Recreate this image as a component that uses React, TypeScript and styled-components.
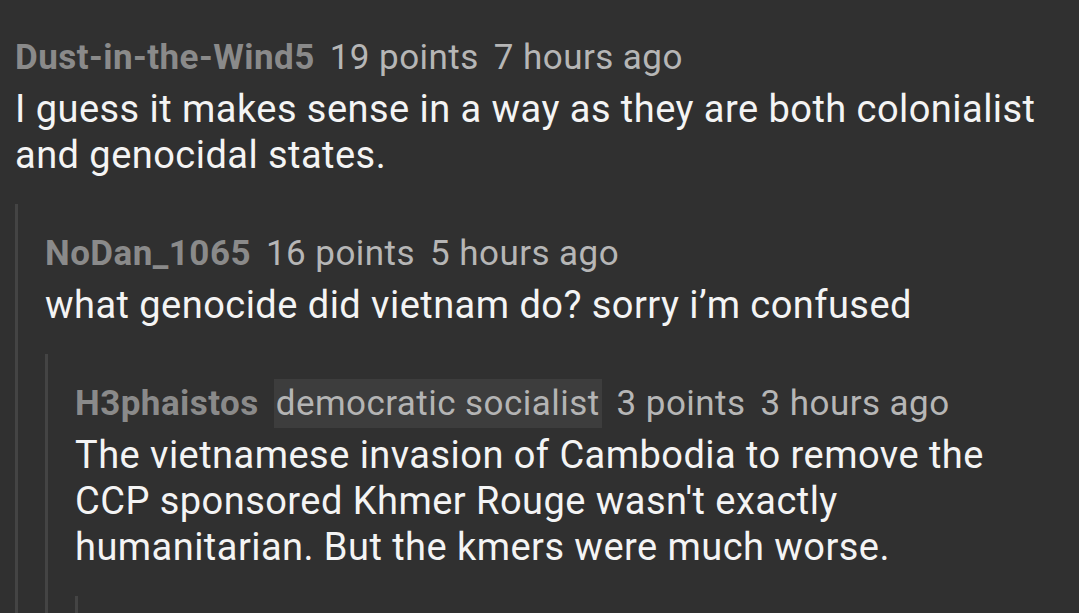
import styled, { createGlobalStyle } from 'styled-components';

const GlobalStyle = createGlobalStyle`
    html, body {
        margin: 0;
        padding: 0;
        background: #303030;
    }
    body {
        font-family: Roboto, 'Noto Sans', sans-serif;
    }
`;

interface CommentData {
    author: string;
    flair?: string;
    points: number;
    time: string;
    text: string;
    children?: CommentData[];
}

const thread: CommentData = {
    author: 'Dust-in-the-Wind5',
    points: 19,
    time: '7 hours ago',
    text: 'I guess it makes sense in a way as they are both colonialist and genocidal states.',
    children: [
        {
            author: 'NoDan_1065',
            points: 16,
            time: '5 hours ago',
            text: 'what genocide did vietnam do? sorry i’m confused',
            children: [
                {
                    author: 'H3phaistos',
                    flair: 'democratic socialist',
                    points: 3,
                    time: '3 hours ago',
                    text: "The vietnamese invasion of Cambodia to remove the CCP sponsored Khmer Rouge wasn't exactly humanitarian. But the kmers were much worse.",
                    children: [],
                },
            ],
        },
    ],
};

const Comment = ({ data }: { data: CommentData }) => (
    <CommentBox>
        <Header>
            <Author>{data.author}</Author>
            {data.flair && <Flair>{data.flair}</Flair>}
            <Meta>{data.points} points</Meta>
            <Meta>{data.time}</Meta>
        </Header>
        <Body>{data.text}</Body>
        {data.children && (
            <Replies>
                {data.children.map((c) => (
                    <Comment key={c.author} data={c} />
                ))}
            </Replies>
        )}
    </CommentBox>
);

const App = () => (
    <>
        <GlobalStyle />
        <Page>
            <Comment data={thread} />
        </Page>
    </>
);

export default App;

const Page = styled.div`
    height: 613px;
    overflow: hidden;
    padding: 8px 0 0 15px;
    box-sizing: border-box;
`;

const CommentBox = styled.div`
    padding-top: 29px;
`;

const Header = styled.div`
    display: flex;
    align-items: center;
    gap: 15px;
    font-size: 35px;
    letter-spacing: 0.45px;
    line-height: 41px;
    white-space: nowrap;
`;

const Author = styled.span`
    font-weight: 700;
    color: #8a8a8a;
`;

// 플레어는 헤더 높이를 늘리지 않음
const Flair = styled.span`
    color: #b4b4b4;
    background: #3d3d3d;
    padding: 4px 2px;
    margin: -4px 0;
`;

const Meta = styled.span`
    color: #b6b6b6;
`;

const Body = styled.div`
    margin-top: 8px;
    font-size: 38px;
    letter-spacing: 0.46px;
    line-height: 46px;
    color: #f4f4f4;
    padding-right: 40px;
`;

const Replies = styled.div`
    margin-top: 26px;
    border-left: 3px solid #444444;
    padding-left: 27px;
    min-height: 20px;
`;
